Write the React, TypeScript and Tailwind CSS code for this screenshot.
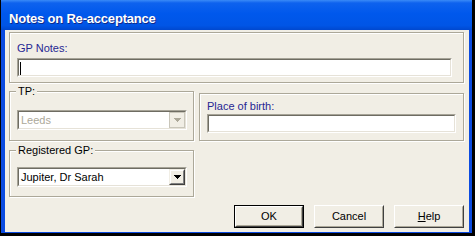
import React from "react";

const etched =
  "border border-[#ACA899] shadow-[inset_1px_1px_0_#ffffff,1px_1px_0_#ffffff]";

function Arrow({ color }: { color: string }) {
  return (
    <svg width="7" height="4" viewBox="0 0 7 4" shapeRendering="crispEdges">
      <path d="M0 0H7V1H6V2H5V3H4V4H3V3H2V2H1V1H0Z" fill={color} />
    </svg>
  );
}

function Sunken({ className, children }: { className: string; children?: React.ReactNode }) {
  return (
    <div
      className={
        "border border-t-[#A6A397] border-l-[#A6A397] border-b-white border-r-white " + className
      }
    >
      <div className="flex h-full w-full border border-t-[#6E6C62] border-l-[#6E6C62] border-b-[#E6E2D8] border-r-[#E6E2D8] bg-white">
        {children}
      </div>
    </div>
  );
}

function Combo({ text, disabled }: { text: string; disabled?: boolean }) {
  return (
    <Sunken className="h-[20px] w-[170px]">
      <div
        className={
          "flex-1 pl-[2px] text-[11px] leading-[16px] " +
          (disabled ? "text-[#ACA899]" : "text-black")
        }
      >
        {text}
      </div>
      {disabled ? (
        <div className="flex h-full w-[16px] items-center justify-center border border-[#C9C6BA] bg-[#F1EEE5]">
          <Arrow color="#ACA899" />
        </div>
      ) : (
        <div className="h-full w-[16px] border border-t-[#F1EEE5] border-l-[#F1EEE5] border-b-[#404040] border-r-[#404040]">
          <div className="flex h-full w-full items-center justify-center border border-t-white border-l-white border-b-[#808080] border-r-[#808080] bg-[#F1EEE5]">
            <Arrow color="#000000" />
          </div>
        </div>
      )}
    </Sunken>
  );
}

function Button({ children, def }: { children: React.ReactNode; def?: boolean }) {
  return (
    <div className={"h-[23px] w-[70px] " + (def ? "border border-black" : "")}>
      <div className="h-full w-full border border-t-white border-l-white border-b-[#404040] border-r-[#404040]">
        <div className="flex h-full w-full items-center justify-center border border-t-[#F1EEE5] border-l-[#F1EEE5] border-b-[#ACA899] border-r-[#ACA899] bg-[#F1EEE5] text-[11px] text-black">
          {children}
        </div>
      </div>
    </div>
  );
}

function Group({ legend, className, children }: { legend: string; className: string; children: React.ReactNode }) {
  return (
    <div className={"relative " + etched + " " + className}>
      <span className="absolute -top-[7px] left-[6px] bg-[#F1EEE5] px-[2px] text-[11px] leading-[13px] text-black">
        {legend}
      </span>
      {children}
    </div>
  );
}

export default function App() {
  return (
    <div className="h-[236px] w-[475px] bg-black pb-[3px] pl-[1px] pr-[3px] font-['Liberation_Sans',Arial,sans-serif]">
      <div className="flex h-full w-full flex-col bg-[#0B4BE0] pb-[1px]">
        <div className="h-[30px] shrink-0 bg-[linear-gradient(to_bottom,#3A8AF7_0%,#0E62EE_10%,#0058EC_45%,#0055E6_85%,#0048CF_100%)] pl-[8px] pt-[11px]">
          <div className="text-[13px] font-bold leading-[15px] tracking-[-0.2px] text-white [text-shadow:1px_1px_0_#0F2A8A]">
            Notes on Re-acceptance
          </div>
        </div>
        <div className="ml-[4px] mr-[3px] flex flex-1 flex-col bg-[#F1EEE5] pl-[4px] pr-[5px] pt-[2px]">
          <div className={etched + " h-[51px] pl-[7px] pr-[11px] pt-[9px]"}>
            <div className="text-[11px] leading-[13px] text-[#262693]">GP Notes:</div>
            <Sunken className="mt-[3px] h-[19px] w-full">
              <div className="ml-[1px] mt-[2px] h-[13px] w-[1px] bg-black" />
            </Sunken>
          </div>
          <div className="mt-[8px] flex items-end gap-[5px]">
            <Group legend="TP:" className="h-[50px] w-[185px] pl-[7px] pt-[18px]">
              <Combo text="Leeds" disabled />
            </Group>
            <div className={etched + " h-[48px] flex-1 pl-[7px] pr-[7px] pt-[6px]"}>
              <div className="text-[11px] leading-[13px] text-[#262693]">Place of birth:</div>
              <Sunken className="mt-[1px] h-[19px] w-full" />
            </div>
          </div>
          <Group legend="Registered GP:" className="mt-[9px] h-[47px] w-[185px] pl-[7px] pt-[16px]">
            <Combo text="Jupiter, Dr Sarah" />
          </Group>
          <div className="ml-[225px] mt-[8px] flex gap-[10px]">
            <Button def>OK</Button>
            <Button>Cancel</Button>
            <Button>
              <span>
                <span className="underline">H</span>elp
              </span>
            </Button>
          </div>
        </div>
      </div>
    </div>
  );
}
